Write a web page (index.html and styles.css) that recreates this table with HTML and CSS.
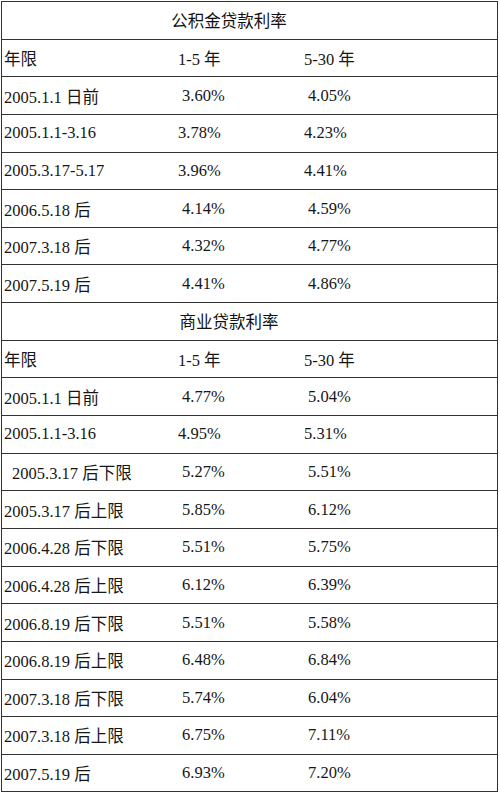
FILE: index.html
```html
<!DOCTYPE html>
<html lang="zh">
<head>
<meta charset="utf-8">
<title>贷款利率</title>
<link rel="stylesheet" href="styles.css">
</head>
<body>
<div class="sheet">
  <div class="row title"><span>公积金贷款利率</span></div>
  <div class="row"><div class="c1">年限</div><div class="c2">1-5 年</div><div class="c3">5-30 年</div></div>
  <div class="row"><div class="c1">2005.1.1 日前</div><div class="c2 ind">3.60%</div><div class="c3 ind">4.05%</div></div>
  <div class="row"><div class="c1">2005.1.1-3.16</div><div class="c2">3.78%</div><div class="c3">4.23%</div></div>
  <div class="row"><div class="c1">2005.3.17-5.17</div><div class="c2">3.96%</div><div class="c3">4.41%</div></div>
  <div class="row"><div class="c1">2006.5.18 后</div><div class="c2 ind">4.14%</div><div class="c3 ind">4.59%</div></div>
  <div class="row"><div class="c1">2007.3.18 后</div><div class="c2 ind">4.32%</div><div class="c3 ind">4.77%</div></div>
  <div class="row"><div class="c1">2007.5.19 后</div><div class="c2 ind">4.41%</div><div class="c3 ind">4.86%</div></div>
  <div class="row title"><span>商业贷款利率</span></div>
  <div class="row"><div class="c1">年限</div><div class="c2">1-5 年</div><div class="c3">5-30 年</div></div>
  <div class="row"><div class="c1">2005.1.1 日前</div><div class="c2 ind">4.77%</div><div class="c3 ind">5.04%</div></div>
  <div class="row"><div class="c1">2005.1.1-3.16</div><div class="c2">4.95%</div><div class="c3">5.31%</div></div>
  <div class="row"><div class="c1 ind2">2005.3.17 后下限</div><div class="c2 ind">5.27%</div><div class="c3 ind">5.51%</div></div>
  <div class="row"><div class="c1">2005.3.17 后上限</div><div class="c2 ind">5.85%</div><div class="c3 ind">6.12%</div></div>
  <div class="row"><div class="c1">2006.4.28 后下限</div><div class="c2 ind">5.51%</div><div class="c3 ind">5.75%</div></div>
  <div class="row"><div class="c1">2006.4.28 后上限</div><div class="c2 ind">6.12%</div><div class="c3 ind">6.39%</div></div>
  <div class="row"><div class="c1">2006.8.19 后下限</div><div class="c2 ind">5.51%</div><div class="c3 ind">5.58%</div></div>
  <div class="row"><div class="c1">2006.8.19 后上限</div><div class="c2 ind">6.48%</div><div class="c3 ind">6.84%</div></div>
  <div class="row"><div class="c1">2007.3.18 后下限</div><div class="c2 ind">5.74%</div><div class="c3 ind">6.04%</div></div>
  <div class="row"><div class="c1">2007.3.18 后上限</div><div class="c2 ind">6.75%</div><div class="c3 ind">7.11%</div></div>
  <div class="row"><div class="c1">2007.5.19 后</div><div class="c2 ind">6.93%</div><div class="c3 ind">7.20%</div></div>
</div>
</body>
</html>
```

FILE: styles.css
```css
html, body {
  margin: 0;
  padding: 0;
  background: #ffffff;
}
body {
  font-family: "Liberation Serif", "Noto Sans CJK SC", serif;
  font-size: 16.5px;
  color: #161616;
}
.sheet {
  margin: 1px 0 0 1px;
  width: 497px;
  box-sizing: border-box;
  border: 1px solid #333333;
}
.row {
  display: grid;
  grid-template-columns: 176px 126px 1fr;
  align-items: center;
  height: 37.65px;
  box-sizing: border-box;
  border-bottom: 1px solid #333333;
}
.row:last-child {
  border-bottom: none;
  height: 36.65px;
}
.c1 {
  padding-left: 2px;
  white-space: nowrap;
}
.c1.ind2 {
  padding-left: 10px;
}
.c2, .c3 {
  white-space: nowrap;
}
.ind {
  padding-left: 4px;
}
.title {
  display: flex;
  justify-content: center;
  padding-right: 41px;
  font-family: "Noto Sans CJK SC", sans-serif;
  font-size: 16.5px;
  color: #111111;
}
```
